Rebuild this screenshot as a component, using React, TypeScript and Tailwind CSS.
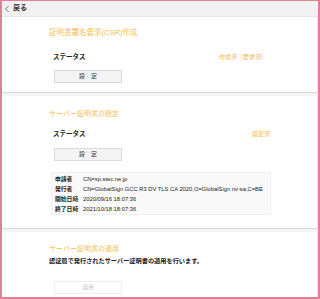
import React from "react";

const font = { fontFamily: '"Liberation Sans", "Noto Sans CJK JP", sans-serif' };

function Btn({ label, disabled }: { label: string; disabled?: boolean }) {
  return (
    <div
      className={
        "ml-[52px] flex h-[13px] w-[68px] items-center justify-center border text-[6px] " +
        (disabled
          ? "border-[#ececec] bg-white text-[#c8c8c8]"
          : "border-[#dadada] bg-[#f3f3f3] text-[#333]")
      }
    >
      {label}
    </div>
  );
}

function Sep() {
  return <div className="h-[4px] border-t border-[#d8d8d8] bg-[#f4f4f4]" />;
}

export default function App() {
  return (
    <div
      className="flex h-[299px] w-[320px] flex-col overflow-hidden border-b-2 border-l-2 border-r-2 border-t border-[#de8194] bg-white"
      style={font}
    >
      <div className="flex h-[16px] shrink-0 items-center border-b border-[#e4e4e4] bg-[#f1f1f1] pl-[2px] text-[7px] text-[#333]">
        <svg width="6" height="8" viewBox="0 0 6 8" className="mr-[3px]">
          <path d="M4.5 1 L1.5 4 L4.5 7" fill="none" stroke="#666" strokeWidth="0.9" />
        </svg>
        <span className="font-bold">戻る</span>
      </div>
      <div className="ml-[1px] flex flex-1 flex-col border-r border-[#e6e6e6]">
        {/* section 1 */}
        <div className="h-[75px] shrink-0 pt-[11px]">
          <div className="ml-[46px] h-[9px] text-[7.5px] leading-[9px] text-[#f5bd55]">
            証明書署名要求(CSR)作成
          </div>
          <div className="mt-[16px] flex h-[8px] items-center">
            <span className="ml-[50px] text-[6.5px] font-bold leading-[8px] text-[#222]">ステータス</span>
            <span className="ml-auto mr-[50px] text-[6px] leading-[8px] text-[#f2b84c]">作成済（要求済）</span>
          </div>
          <div className="-ml-[1px] mt-[9px]">
            <Btn label="設　定" />
          </div>
        </div>
        <Sep />
        {/* section 2 */}
        <div className="h-[132px] shrink-0 pt-[13px]">
          <div className="ml-[46px] h-[9px] text-[7px] leading-[9px] text-[#f5bd55]">サーバー証明書の設定</div>
          <div className="mt-[12px] flex h-[8px] items-center">
            <span className="ml-[50px] text-[6.5px] font-bold leading-[8px] text-[#222]">ステータス</span>
            <span className="ml-auto mr-[47px] text-[6px] leading-[8px] text-[#f2b84c]">設定済</span>
          </div>
          <div className="-ml-[1px] mt-[10px]">
            <Btn label="設　定" />
          </div>
          <div className="ml-[48px] mt-[11px] flex h-[43px] w-[220px] flex-col justify-center gap-[2px] border border-[#efefef] bg-[#f9f9f9] pl-[3px] text-[5.8px] leading-[8px] text-[#222]">
            {[
              ["申請者", "CN=sp.stec.ne.jp"],
              ["発行者", "CN=GlobalSign GCC R3 DV TLS CA 2020,O=GlobalSign nv-sa,C=BE"],
              ["開始日時", "2020/09/16 18:07:36"],
              ["終了日時", "2021/10/18 18:07:36"],
            ].map(([k, v]) => (
              <div key={k} className="flex whitespace-nowrap">
                <span className="w-[28px] shrink-0 font-bold">{k}</span>
                <span>{v}</span>
              </div>
            ))}
          </div>
        </div>
        <Sep />
        {/* section 3 */}
        <div className="flex-1 pt-[12px]">
          <div className="ml-[46px] h-[9px] text-[7px] leading-[9px] text-[#f5bd55]">サーバー証明書の適用</div>
          <div className="ml-[46px] mt-[4px] h-[8px] text-[6.2px] font-bold leading-[8px] text-[#222]">
            認証局で発行されたサーバー証明書の適用を行います。
          </div>
          <div className="-ml-[1px] mt-[16px]">
            <Btn label="適用" disabled />
          </div>
        </div>
      </div>
    </div>
  );
}
